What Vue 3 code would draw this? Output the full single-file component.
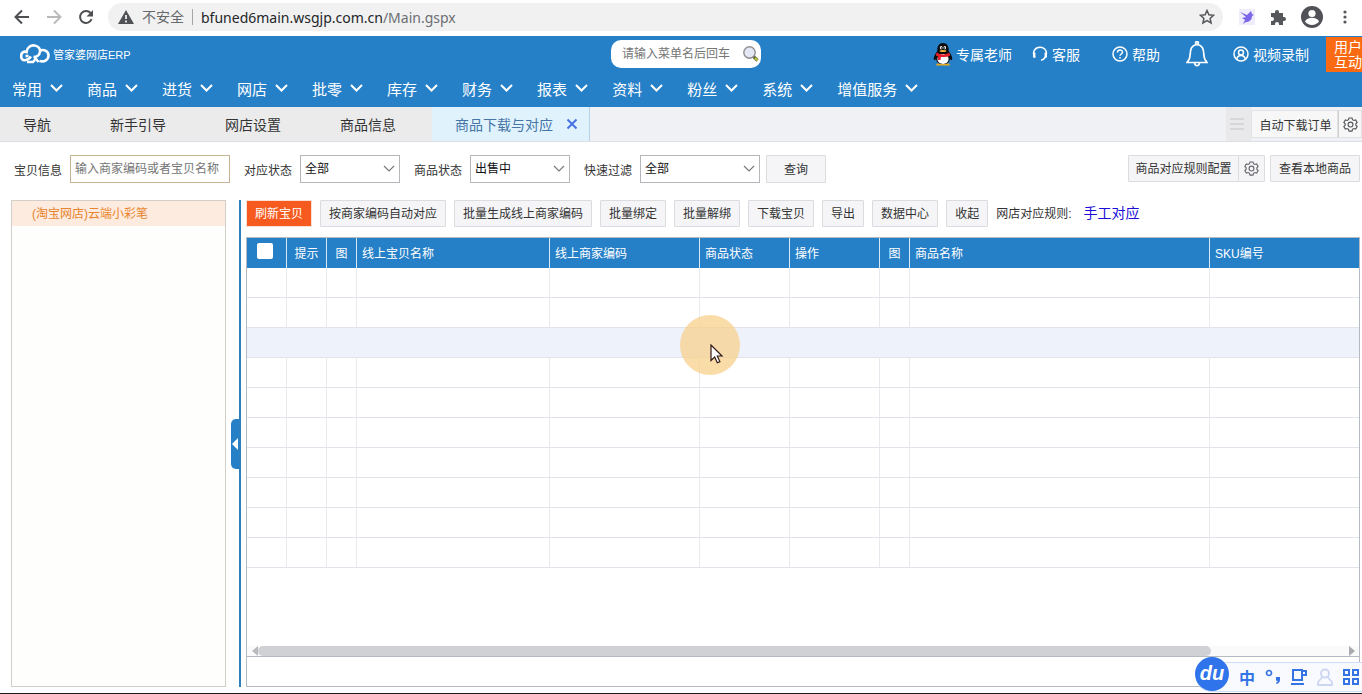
<script setup>
import { ref } from 'vue'

const url = { host: 'bfuned6main.wsgjp.com.cn', path: '/Main.gspx' }
const menus = ['常用', '商品', '进货', '网店', '批零', '库存', '财务', '报表', '资料', '粉丝', '系统', '增值服务']
const tabs = ['导航', '新手引导', '网店设置', '商品信息']
const actions = ['按商家编码自动对应', '批量生成线上商家编码', '批量绑定', '批量解绑', '下载宝贝', '导出', '数据中心', '收起']
const columns = [
  { label: '提示', cls: 'w-tip', center: true },
  { label: '图', cls: 'w-pic', center: true },
  { label: '线上宝贝名称', cls: 'w-name' },
  { label: '线上商家编码', cls: 'w-code' },
  { label: '商品状态', cls: 'w-state' },
  { label: '操作', cls: 'w-state' },
  { label: '图', cls: 'w-pic', center: true },
  { label: '商品名称', cls: 'w-goods' },
  { label: 'SKU编号', cls: 'w-rest' },
]
const rowCount = 10
const hoverRow = 3
const keyword = ref('')
const menuKeyword = ref('')
const matchState = ref('全部')
const goodsState = ref('出售中')
const quickFilter = ref('全部')
const gear = 'M6.4 1h3.2l.5 1.9 1.5.8 1.9-.6 1.6 2.7-1.4 1.4v1.6l1.4 1.4-1.6 2.7-1.9-.6-1.5.8-.5 1.9H6.4l-.5-1.9-1.5-.8-1.9.6L.9 10.200l1.400-1.400V7.200L.9 5.800l1.600-2.700 1.900.6 1.500-.8z'
</script>

<template>
  <div class="page">
    <div class="browser">
      <button class="nav" aria-label="后退">
        <svg width="16" height="16" viewBox="0 0 16 16"><path d="M15 8H2M8 1.500L1.500 8 8 14.500" fill="none" stroke="#4d4f52" stroke-width="2" /></svg>
      </button>
      <button class="nav" aria-label="前进">
        <svg width="16" height="16" viewBox="0 0 16 16"><path d="M1 8h13M8 1.500L14.500 8 8 14.500" fill="none" stroke="#b9babc" stroke-width="2" /></svg>
      </button>
      <button class="nav" aria-label="刷新">
        <svg width="16" height="16" viewBox="0 0 16 16"><path d="M13.600 10.200A6 6 0 1 1 12.600 4" fill="none" stroke="#4d4f52" stroke-width="2" /><path d="M15 1v6.500H8.500z" fill="#4d4f52" /></svg>
      </button>
      <div class="omnibox">
        <svg width="16" height="14" viewBox="0 0 16 14"><path d="M8 0l8 14H0z" fill="#4f5154" /><path d="M8 5v4M8 10.500v2" stroke="#fff" stroke-width="1.600" /></svg>
        <span class="insecure">不安全</span>
        <span class="url">{{ url.host }}<span class="path">{{ url.path }}</span></span>
        <svg class="star" width="16" height="16" viewBox="0 0 16 16"><path d="M8 1.500l1.900 4.300 4.700.5-3.500 3.100 1 4.600L8 11.600 3.900 14l1-4.600L1.400 6.300l4.700-.5z" fill="none" stroke="#55575a" stroke-width="1.500" /></svg>
      </div>
      <div class="tools">
        <svg width="16" height="16" viewBox="0 0 16 16"><rect width="16" height="16" fill="#efecfb" /><path d="M1 3l7 3 4-4 1 3 2 1-2 1c0 4-3 6-6 6l-3 2 2-4-3-2 4-1z" fill="#7a68e8" /></svg>
        <svg width="16" height="16" viewBox="0 0 16 16"><path d="M1 4h4V3a2 2 0 0 1 4 0v1h4v4h1a2 2 0 0 1 0 4h-1v4H9v-1a2 2 0 0 0-4 0v1H1v-4h1a2 2 0 0 0 0-4H1z" fill="#55575b" /></svg>
        <svg width="22" height="22" viewBox="0 0 22 22"><circle cx="11" cy="11" r="11" fill="#505257" /><circle cx="11" cy="7.500" r="3.600" fill="#fff" /><path d="M4 15.500c2-5 12-5 14 0-3 4.500-11 4.500-14 0z" fill="#fff" /></svg>
        <svg width="4" height="16" viewBox="0 0 4 16" fill="#55575b"><circle cx="2" cy="3" r="1.600" /><circle cx="2" cy="8" r="1.600" /><circle cx="2" cy="13" r="1.600" /></svg>
      </div>
    </div>

    <header class="header">
      <div class="top">
        <div class="brand">
          <svg width="30" height="20" viewBox="0 0 30 20" fill="none" stroke="#fff" stroke-width="2.600"><path d="M11 12.500c-3 4-10 6-9.800-.5C1 8.500 4 7 6.500 8 7 3 11 1 14.500 1.500c4 .5 6 3.500 5.500 6.500-.5 3-3.500 5-6.500 5" /><path d="M5.500 12h3M14.500 13l4 5M19.500 7c4-2.500 9 0 9 4.500 0 4-4 7-9 5.500" /><path d="M7 18h6l3-3.500" /></svg>
          <span>管家婆网店ERP</span>
        </div>
        <div class="search">
          <input v-model="menuKeyword" type="text" placeholder="请输入菜单名后回车" aria-label="搜索菜单" />
          <svg width="16" height="16" viewBox="0 0 16 16"><path d="M10.500 10.500l4 4" stroke="#5d6b35" stroke-width="3.200" /><path d="M12 12l2.500 2.500" stroke="#c5c943" stroke-width="1.800" /><circle cx="6.500" cy="6.500" r="5.700" fill="#e4e8f4" stroke="#8e8e92" stroke-width="1.400" /></svg>
        </div>
        <nav class="services">
          <a href="#" class="qq">
            <svg width="20" height="23" viewBox="0 0 20 23"><path d="M4 20.500h12l1 2H3z" fill="#e9a91c" /><path d="M10 0C6 0 4 3 4.300 8 2 11 0 15 1 17c.8.6 2-1 2-1 1 4 3 5 7 5s6-1 7-5c0 0 1.200 1.600 2 1 1-2-1-6-3.300-9C16 3 14 0 10 0z" fill="#0c0c10" /><ellipse cx="10" cy="16" rx="5.600" ry="5" fill="#fff" /><path d="M3.500 9.500c4 2.500 9 2.500 13 0l.6 3c-4 2-10 2-14.200 0z" fill="#e5202a" /><path d="M5 12l3 1-.5 4H5z" fill="#e5202a" /><ellipse cx="8.200" cy="4.700" rx="1.300" ry="1.800" fill="#fff" /><ellipse cx="11.800" cy="4.700" rx="1.300" ry="1.800" fill="#fff" /><circle cx="8.500" cy="5" r=".7" /><circle cx="11.500" cy="5" r=".7" /><ellipse cx="10" cy="8" rx="3.400" ry="1.100" fill="#f4b32a" /></svg>
            专属老师
          </a>
          <a href="#" class="kefu">
            <svg width="16" height="16" viewBox="0 0 16 16" fill="none" stroke="#fff"><path d="M3 11.500C-.5 6 3 1.200 8 1.200s8.500 5 5 10.300c-1 1.500-2 2.500-4 2.700" stroke-width="1.500" /><path d="M2.200 6.500v5M13.800 6.500v5" stroke-width="2.400" /></svg>
            客服
          </a>
          <a href="#" class="help">
            <svg width="16" height="16" viewBox="0 0 16 16" fill="none" stroke="#fff" stroke-width="1.500"><circle cx="8" cy="8" r="7" /><path d="M5.500 6.500c0-3.300 5-3.300 5-.3 0 1.800-2.500 1.800-2.500 3.600M8 11v1.600" /></svg>
            帮助
          </a>
          <a href="#" class="bell" aria-label="消息">
            <svg width="22" height="26" viewBox="0 0 22 26" fill="none" stroke="#fff" stroke-width="1.700"><circle cx="11" cy="2" r="1.400" /><path d="M11 3.500c-9 1-5.500 11-8 15L1 21.500h20l-2-3c-2.500-4 1-14-8-15zM8.500 22c.5 3.500 4.500 3.500 5 0" /></svg>
          </a>
          <a href="#" class="video">
            <svg width="16" height="16" viewBox="0 0 16 16" fill="none" stroke="#fff" stroke-width="1.500"><circle cx="8" cy="8" r="7" /><circle cx="8" cy="6.500" r="2.500" /><path d="M3.800 13c1-4.800 7.400-4.800 8.400 0" /></svg>
            视频录制
          </a>
          <a href="#" class="interact">用户<br />互动</a>
        </nav>
      </div>
      <nav class="menu">
        <button v-for="m in menus" :key="m">
          {{ m }}
          <svg width="13" height="8" viewBox="0 0 13 8"><path d="M1 1l5.500 5.500L12 1" fill="none" stroke="#fff" stroke-width="2" /></svg>
        </button>
      </nav>
    </header>

    <div class="tabs">
      <button v-for="t in tabs" :key="t" class="tab">{{ t }}</button>
      <div class="tab active">
        商品下载与对应
        <button class="close" aria-label="关闭">
          <svg width="12" height="12" viewBox="0 0 12 12"><path d="M1.500 1.500l9 9M10.500 1.500l-9 9" stroke="#4773e0" stroke-width="2" /></svg>
        </button>
      </div>
      <div class="tab-tools">
        <button class="list" aria-label="标签列表">
          <svg width="14" height="12" viewBox="0 0 14 12"><path d="M0 1h14M0 6h14M0 11h14" stroke="#c4c5c9" /></svg>
        </button>
        <button class="order">自动下载订单</button>
        <button class="gear" aria-label="下载设置">
          <svg width="15" height="15" viewBox="0 0 16 16" fill="none" stroke="#55565a" stroke-width="1.200"><path :d="gear" /><circle cx="8" cy="8" r="2.600" /></svg>
        </button>
      </div>
    </div>

    <form class="filters" @submit.prevent>
      <label for="kw">宝贝信息</label>
      <input id="kw" v-model="keyword" type="text" placeholder="输入商家编码或者宝贝名称" />
      <label for="ms">对应状态</label>
      <span class="select">
        <select id="ms" v-model="matchState"><option>全部</option></select>
        <svg width="12" height="8" viewBox="0 0 12 8"><path d="M1 1l5 5 5-5" fill="none" stroke="#77787c" stroke-width="1.200" /></svg>
      </span>
      <label for="gs">商品状态</label>
      <span class="select">
        <select id="gs" v-model="goodsState"><option>出售中</option></select>
        <svg width="12" height="8" viewBox="0 0 12 8"><path d="M1 1l5 5 5-5" fill="none" stroke="#77787c" stroke-width="1.200" /></svg>
      </span>
      <label for="qf">快速过滤</label>
      <span class="select wide">
        <select id="qf" v-model="quickFilter"><option>全部</option></select>
        <svg width="12" height="8" viewBox="0 0 12 8"><path d="M1 1l5 5 5-5" fill="none" stroke="#77787c" stroke-width="1.200" /></svg>
      </span>
      <button class="btn query">查询</button>
      <div class="right">
        <button class="btn rule">商品对应规则配置</button>
        <button class="btn rule-gear" aria-label="规则设置">
          <svg width="15" height="15" viewBox="0 0 16 16" fill="none" stroke="#66676b" stroke-width="1.200"><path :d="gear" /><circle cx="8" cy="8" r="2.600" /></svg>
        </button>
        <button class="btn local">查看本地商品</button>
      </div>
    </form>

    <main class="main">
      <aside class="shops">
        <a href="#" class="shop">(淘宝网店)云端小彩笔</a>
      </aside>
      <div class="divider">
        <button class="handle" aria-label="收起侧栏">
          <svg width="6" height="12" viewBox="0 0 6 12"><path d="M6 0v12L0 6z" fill="#fff" /></svg>
        </button>
      </div>
      <section class="content">
        <div class="toolbar">
          <button class="btn primary">刷新宝贝</button>
          <button v-for="a in actions" :key="a" class="btn">{{ a }}</button>
          <span class="rule-label">网店对应规则:</span>
          <a href="#" class="manual">手工对应</a>
        </div>
        <div class="grid">
          <table>
            <thead>
              <tr>
                <th class="w-check"><input type="checkbox" aria-label="全选" /></th>
                <th v-for="(c, i) in columns" :key="i" :class="[c.cls, { center: c.center }]">{{ c.label }}</th>
              </tr>
            </thead>
            <tbody>
              <tr v-for="r in rowCount" :key="r" :class="{ hover: r === hoverRow }">
                <td v-for="n in columns.length + 1" :key="n"></td>
              </tr>
            </tbody>
          </table>
          <div class="scroll">
            <svg width="6" height="10" viewBox="0 0 6 10"><path d="M6 0v10L0 5z" fill="#b9babd" /></svg>
            <div class="track"><div class="thumb"></div></div>
            <svg width="6" height="10" viewBox="0 0 6 10"><path d="M0 0v10l6-5z" fill="#a9aaad" /></svg>
          </div>
          <div class="foot"></div>
        </div>
      </section>
    </main>

    <div class="spot">
      <svg width="14" height="20" viewBox="0 0 14 20"><path d="M1 1v15.500l3.700-3.500 2.600 5.800 2.600-1.200L7.300 12H12z" fill="#fff" stroke="#301a16" stroke-width="1.200" /></svg>
    </div>

    <div class="ime">
      <span class="du">du</span>
      <span class="zh">中</span>
      <svg width="16" height="16" viewBox="0 0 16 16"><circle cx="4" cy="4" r="2.500" fill="none" stroke="#3474e4" stroke-width="1.700" /><path d="M11 8h4v3c0 2-1.500 3.500-3.500 4l-.5-1.200c1-.5 1.500-1 1.600-2H11z" fill="#3474e4" /></svg>
      <svg width="16" height="16" viewBox="0 0 16 16" fill="none" stroke="#3474e4" stroke-width="2"><path d="M2 1h9v10H2zM11 2h4v4h-4M0 15h13" /></svg>
      <svg width="16" height="18" viewBox="0 0 16 18" fill="none" stroke="#ccd6f3" stroke-width="1.800"><circle cx="8" cy="5.500" r="4" /><path d="M5.500 9L1 14v3h14v-3l-4.500-5" /></svg>
      <svg width="16" height="16" viewBox="0 0 16 16" fill="none" stroke="#3474e4" stroke-width="2"><path d="M1 1h5v5H1zM10 1h5v5h-5zM1 10h5v5H1zM10 10h5v5h-5z" /></svg>
    </div>
  </div>
</template>

<style>
html,
body,
#app {
  height: 100%;
}
body {
  margin: 0;
  overflow: hidden;
}
</style>

<style scoped>
.page {
  position: relative;
  display: flex;
  flex-direction: column;
  box-sizing: border-box;
  height: 100vh;
  overflow: hidden;
  background: #fff;
  border-bottom: 1px solid #1d1d1f;
  font-family: "Liberation Sans", "Noto Sans CJK SC", sans-serif;
  font-size: 12px;
  color: #333;
}
.page * {
  box-sizing: border-box;
}
button,
input,
select {
  font: inherit;
  color: inherit;
  margin: 0;
}
button {
  display: flex;
  align-items: center;
  justify-content: center;
  padding: 0;
  border: 0;
  background: none;
  white-space: nowrap;
}
a {
  text-decoration: none;
  color: inherit;
}
svg {
  flex: none;
  display: block;
}

.browser {
  flex: none;
  display: flex;
  align-items: center;
  height: 36px;
  padding: 0 15px 2px 14px;
}
.nav {
  width: 16px;
  margin-right: 16px;
}
.omnibox {
  flex: 1;
  display: flex;
  align-items: center;
  height: 28px;
  margin-left: -2px;
  padding: 0 8px 0 10px;
  border-radius: 14px;
  background: #f1f1f2;
  font-family: "Noto Sans", "Noto Sans CJK SC", sans-serif;
  font-size: 14px;
}
.insecure {
  margin-left: 8px;
  padding-right: 8px;
  border-right: 1px solid #a5a6a8;
  line-height: 16px;
  color: #66686b;
}
.url {
  margin-left: 8px;
  color: #242528;
}
.path {
  color: #6c6e71;
}
.star {
  margin-left: auto;
}
.tools {
  display: flex;
  align-items: center;
  gap: 15px;
  margin-left: 16px;
}
.tools svg:last-child {
  margin-left: 5px;
}

.header {
  flex: none;
  background: #2680c8;
  color: #fff;
}
.top {
  display: flex;
  align-items: center;
  height: 36px;
}
.brand {
  flex: 1;
  display: flex;
  align-items: center;
  gap: 3px;
  padding-left: 20px;
  font-size: 11px;
}
.search {
  display: flex;
  align-items: center;
  width: 150px;
  height: 28px;
  padding: 0 2px 0 11px;
  border-radius: 10px;
  background: #fff;
}
.search input {
  flex: 1;
  min-width: 0;
  padding: 0;
  border: 0;
  outline: 0;
  background: none;
  color: #333;
}
.search input::placeholder {
  color: #757575;
  opacity: 1;
}
.services {
  display: flex;
  align-items: center;
  margin-left: 172px;
  font-size: 14px;
}
.services a {
  display: flex;
  align-items: center;
  gap: 4px;
  white-space: nowrap;
}
.services .qq {
  gap: 3px;
}
.kefu {
  margin-left: 20px;
}
.help {
  margin-left: 32px;
}
.bell {
  margin-left: 26px;
}
.video {
  margin-left: 25px;
}
.services .interact {
  display: block;
  height: 35px;
  margin-left: 17px;
  padding: 3px 0 0 8px;
  background: #fa6a12;
  line-height: 15px;
}
.menu {
  display: flex;
  gap: 24px;
  height: 35px;
  padding: 0 12px 3px;
  font-size: 15px;
}
.menu button {
  gap: 8px;
}

.tabs {
  flex: none;
  display: flex;
  height: 35px;
  border-bottom: 1px solid #dcdfe6;
  background: linear-gradient(90deg, #ebebec 0, #ebebec 432px, #eff1f5 590px);
  font-size: 14px;
}
.tab {
  padding: 0 36px 0 23px;
  white-space: nowrap;
}
.tab.active {
  display: flex;
  align-items: center;
  gap: 13px;
  padding-right: 11px;
  border-right: 1px solid #b9d3e6;
  background: #e0f3fd;
  color: #4574a6;
}
.tab-tools {
  display: flex;
  align-items: center;
  margin-left: auto;
  font-size: 12px;
}
.tab-tools .list {
  width: 25px;
  height: 34px;
  padding-right: 4px;
  background: #e9e9ec;
}
.order,
.gear {
  height: 28px;
  border: 1px solid #e2e2e4;
  background: #f7f7f8;
}
.order {
  width: 87px;
  padding-left: 2px;
}
.gear {
  width: 24px;
  border-left-color: #cfcfd2;
}

.filters {
  flex: none;
  display: flex;
  align-items: center;
  height: 54px;
  padding: 0 2px 0 14px;
}
.filters label {
  margin: 0 8px 0 14px;
}
.filters label:first-child {
  margin-left: 0;
}
.filters input {
  width: 160px;
  height: 28px;
  padding: 0 4px;
  border: 1px solid #c5b394;
  outline: 0;
  background: #fff;
}
.filters input::placeholder {
  color: #757575;
  opacity: 1;
}
.select {
  position: relative;
  width: 100px;
}
.select.wide {
  width: 120px;
}
.select select {
  appearance: none;
  display: block;
  width: 100%;
  height: 28px;
  padding: 0 4px;
  border: 1px solid #b5b7bb;
  border-radius: 0;
  background: #fff;
  color: #111;
}
.select svg {
  position: absolute;
  right: 5px;
  top: 10px;
  pointer-events: none;
}
.btn {
  height: 27px;
  padding: 0 8px 2px;
  border: 1px solid #dcdce0;
  border-radius: 1px;
  background: #f5f5f7;
}
.query {
  width: 60px;
  height: 28px;
  margin-left: 6px;
}
.right {
  display: flex;
  margin: 0 0 2px auto;
}
.rule {
  width: 111px;
}
.rule-gear {
  width: 27px;
  margin-left: -1px;
  padding: 0;
}
.local {
  margin-left: 5px;
}

.main {
  flex: 1;
  display: flex;
  min-height: 0;
  margin: 4px 2px 6px 11px;
}
.shops {
  width: 215px;
  border: 1px solid #d2cec8;
  background: #fefefd;
}
.shop {
  display: block;
  height: 25px;
  padding-left: 20px;
  background: #fdebe0;
  line-height: 27px;
  color: #e8842c;
}
.divider {
  display: flex;
  align-items: center;
  margin-left: 5px;
  border-right: 2px solid #2f7fbd;
}
.handle {
  width: 8px;
  height: 50px;
  border-radius: 5px 0 0 5px;
  background: #2680c8;
}
.content {
  flex: 1;
  display: flex;
  flex-direction: column;
  min-width: 0;
  margin-left: 5px;
}
.toolbar {
  display: flex;
  align-items: center;
  gap: 8px;
}
.primary {
  border-color: #fbe0d5;
  background: #f65a1e;
  color: #fff;
}
.rule-label,
.manual {
  padding-bottom: 3px;
}
.manual {
  margin-left: 4px;
  font-size: 14px;
  color: #1a0dd8;
}
.grid {
  flex: 1;
  display: flex;
  flex-direction: column;
  min-height: 0;
  margin-top: 10px;
  border: 1px solid #b4b9c2;
}
table {
  width: 100%;
  border-collapse: separate;
  border-spacing: 0;
  table-layout: fixed;
}
th {
  height: 30px;
  padding: 0 5px 2px;
  border-right: 1px solid #d9e8f5;
  background: #2680c8;
  color: #fff;
  font-weight: 400;
  text-align: left;
  white-space: nowrap;
}
th.center {
  padding: 0 0 2px;
  text-align: center;
}
th:last-child {
  border-right: 0;
}
th.w-check { width: 40px; padding-left: 10px; }
.w-tip { width: 40px; }
.w-pic { width: 30px; }
.w-name { width: 193px; }
.w-code { width: 150px; }
.w-state { width: 90px; }
.w-goods { width: 300px; }
th input {
  appearance: none;
  display: block;
  width: 16px;
  height: 16px;
  margin-bottom: 2px;
  border-radius: 2px;
  background: #fff;
}
td {
  height: 30px;
  padding: 0;
  border-right: 1px solid #e9e9f0;
  border-bottom: 1px solid #e2e3ea;
}
td:last-child {
  border-right: 0;
}
.hover td {
  border-right-color: #eef2fb;
  background: #eef2fb;
}
.scroll {
  display: flex;
  align-items: center;
  height: 10px;
  margin-top: auto;
  padding: 0 4px 0 5px;
  background: #fafafb;
}
.track {
  flex: 1;
  padding-right: 138px;
}
.thumb {
  height: 10px;
  border-radius: 5px;
  background: #d0d1d4;
}
.foot {
  height: 30px;
  border-top: 1px solid #b4b9c2;
}

/* pointer highlight and input-method bar float above the page */
.spot {
  position: absolute;
  left: 680px;
  top: 315px;
  width: 60px;
  height: 60px;
  padding: 29px 0 0 30px;
  border-radius: 50%;
  background: rgba(248, 208, 140, 0.75);
  pointer-events: none;
}
.ime {
  position: absolute;
  right: 0;
  bottom: 1px;
  display: flex;
  align-items: center;
  gap: 10px;
  height: 30px;
  padding-right: 3px;
  border: 1px solid #cddcf4;
  border-right: 0;
  border-radius: 15px 0 0 15px;
  background: #f9fafe;
}
.du {
  width: 34px;
  height: 34px;
  margin: -6px 0 0 -2px;
  border-radius: 50%;
  background: #2f74ea;
  color: #fff;
  font-size: 20px;
  font-style: italic;
  font-weight: 700;
  line-height: 32px;
  text-align: center;
}
.zh {
  font-size: 16px;
  font-weight: 700;
  color: #3474e4;
}
</style>
